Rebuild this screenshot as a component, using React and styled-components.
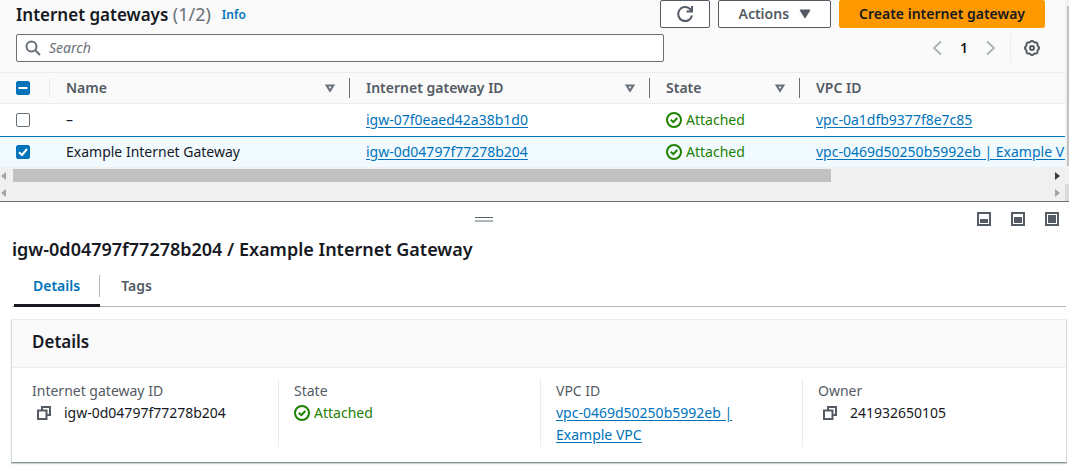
import React from "react";
import styled, { createGlobalStyle, css } from "styled-components";

const GlobalStyle = createGlobalStyle`
  *, *::before, *::after { box-sizing: border-box; }
  body {
    margin: 0;
    background: #fff;
    color: #16191f;
    font-family: "Noto Sans", "Open Sans", sans-serif;
    font-size: 14px;
    line-height: 22px;
  }
  h1, h2, h3, dl, dt, dd { margin: 0; }
  button, input { font: inherit; color: inherit; }
`;

const Page = styled.main`
  display: flex;
  flex-direction: column;
`;

const ListPanel = styled.section`
  border-bottom: 1px solid #6b6e70;
  background: #fafafa;
`;

const Scroller = styled.div`
  display: flex;
`;

const ListBody = styled.div`
  flex: 1;
  min-width: 0;
`;

const VerticalTrack = styled.div`
  width: 4px;
  padding: 6px 0 18px 2px;
  background: #f1f1f1;
`;

const VerticalThumb = styled.div`
  height: 100%;
  background: #c1c1c1;
`;

const TitleRow = styled.header`
  display: flex;
  align-items: center;
  height: 28px;
  padding: 0 20px 0 16px;
`;

const ListTitle = styled.h1`
  font-size: 17px;
  font-weight: 600;
`;

const Count = styled.span`
  font-size: 18px;
  font-weight: 400;
  color: #687078;
`;

const InfoLink = styled.a`
  margin: 2px auto 0 11px;
  font-size: 12px;
  font-weight: 600;
  color: #0073bb;
  text-decoration: none;
`;

const Actions = styled.div`
  display: flex;
  gap: 8px;
`;

const Button = styled.button`
  display: inline-flex;
  align-items: center;
  justify-content: center;
  gap: 10px;
  height: 28px;
  padding: 0 19px;
  border: 1px solid #545b64;
  border-radius: 2px;
  background: #fff;
  color: #545b64;
  font-size: 14px;
  font-weight: 600;
  white-space: nowrap;
  ${(p) => p.$iconOnly && css`
    width: 50px;
    padding: 0;
  `}
  ${(p) => p.$primary && css`
    border-color: #ff9900;
    background: #ff9900;
    color: #16191f;
  `}
`;

const FilterRow = styled.div`
  display: flex;
  align-items: center;
  justify-content: space-between;
  margin-top: 6px;
  padding: 0 20px 10px 16px;
`;

const SearchBox = styled.label`
  display: flex;
  align-items: center;
  gap: 8px;
  width: 63%;
  height: 28px;
  padding: 0 8px;
  border: 1px solid #687078;
  border-radius: 2px;
  background: #fff;
  color: #687078;
`;

const SearchInput = styled.input`
  flex: 1;
  min-width: 0;
  height: 22px;
  padding: 0;
  border: 0;
  outline: 0;
  background: transparent;
  &::placeholder {
    color: #687078;
    font-style: italic;
    opacity: 1;
  }
`;

const Pager = styled.nav`
  display: flex;
  align-items: center;
`;

const PlainButton = styled.button`
  display: flex;
  padding: 0;
  border: 0;
  background: none;
  color: ${(p) => (p.disabled ? "#aab7b8" : "#545b64")};
`;

const PageNumber = styled(PlainButton)`
  margin: 0 18px;
  font-weight: 600;
  color: #16191f;
`;

const PagerPreferences = styled.div`
  margin-left: 14px;
  padding: 6px 5px 6px 13px;
  border-left: 1px solid #eaeded;
`;

const TableWrap = styled.div`
  overflow: hidden;
  background: #fff;
`;

const Table = styled.table`
  width: 100%;
  table-layout: fixed;
  border-collapse: separate;
  border-spacing: 0;
`;

const Col = styled.col`
  width: ${(p) => p.$width};
`;

const HeadCell = styled.th`
  height: 32px;
  padding: 4px 0;
  border-top: 1px solid #eaeded;
  border-bottom: 1px solid #eaeded;
  background: #fafafa;
  color: #545b64;
  font-weight: 600;
  text-align: left;
`;

const HeadContent = styled.div`
  display: flex;
  align-items: center;
  justify-content: space-between;
  height: 20px;
  padding: 0 14px 0 16px;
  border-right: 1px solid ${(p) => p.$divider || "transparent"};
`;

const Row = styled.tr`
  background: ${(p) => (p.$selected ? "#f1faff" : "#fff")};
`;

const Cell = styled.td`
  height: ${(p) => (p.$selected ? "31px" : "32px")};
  padding: 0 0 0 16px;
  border-top: ${(p) => (p.$selected ? "1px solid #0073bb" : "0")};
  overflow: hidden;
  white-space: nowrap;
`;

const CheckBox = styled.input`
  appearance: none;
  display: block;
  width: 14px;
  height: 14px;
  margin: 0;
  border: 1px solid ${(p) => (p.$on ? "#0073bb" : "#687078")};
  border-radius: 2px;
  background: ${(p) => (p.$on ? "#0073bb" : "#fff")};
`;

const CheckWrap = styled.span`
  position: relative;
  display: block;
  width: 14px;
  height: 14px;
  svg {
    position: absolute;
    inset: 0;
    pointer-events: none;
  }
`;

const Link = styled.a`
  color: #0073bb;
  text-decoration: underline;
  text-underline-offset: 2px;
`;

const StatusText = styled.span`
  display: flex;
  align-items: center;
  gap: 4px;
  color: #1d8102;
`;

const HorizontalTrack = styled.div`
  display: flex;
  align-items: center;
  height: 17px;
  padding: 0 5px 0 1px;
  background: #f0f0f0;
`;

const TrackSpace = styled.div`
  flex: 1;
  display: flex;
  margin: 0 7px;
`;

const HorizontalThumb = styled.div`
  width: 79%;
  height: 13px;
  background: #c1c1c1;
`;

const Corner = styled.div`
  width: 4px;
  background: #dcdcdc;
`;

const PageScroll = styled.div`
  display: flex;
  & > :first-child { flex: 1; }
`;

const SplitPanel = styled.section`
  padding-bottom: 6px;
`;

const PanelBar = styled.div`
  display: flex;
  align-items: center;
  height: 34px;
  padding-right: 10px;
`;

const HandleArea = styled.div`
  flex: 1;
  display: flex;
  justify-content: center;
  margin-right: 9px;
`;

const Handle = styled.button`
  display: block;
  width: 18px;
  height: 5px;
  padding: 0;
  border: solid #879596;
  border-width: 1px 0 2px;
  border-top-color: #545b64;
  border-bottom-color: #aab7b8;
  background: none;
`;

const PanelSizes = styled.div`
  display: flex;
  gap: 20px;
`;

const PanelTitle = styled.h2`
  padding: 0 12px;
  font-size: 18px;
  line-height: 26px;
  font-weight: 600;
`;

const Tabs = styled.div`
  display: flex;
  gap: 2px;
  margin: 6px 3px 0 12px;
  padding-left: 2px;
  border-bottom: 1px solid #aab7b8;
`;

const Tab = styled.button`
  height: 39px;
  margin-bottom: -1px;
  padding: 0;
  border: 0;
  border-bottom: 3px solid ${(p) => (p.$active ? "#16191f" : "transparent")};
  background: none;
  color: ${(p) => (p.$active ? "#0073bb" : "#545b64")};
  font-weight: 600;
`;

const TabLabel = styled.span`
  display: block;
  padding: 0 19px;
  border-right: 1px solid ${(p) => (p.$divider ? "#aab7b8" : "transparent")};
`;

const Card = styled.section`
  margin: 12px 2px 0 11px;
  border: 1px solid #d5dbdb;
  border-top-color: #eaeded;
  border-bottom-color: #879596;
  background: #fff;
  box-shadow: 0 1px 1px rgba(0, 28, 36, 0.2);
`;

const CardHeader = styled.header`
  padding: 9px 20px 12px;
  border-bottom: 1px solid #eaeded;
  background: #fafafa;
`;

const CardTitle = styled.h3`
  font-size: 17px;
  line-height: 26px;
  font-weight: 600;
`;

const Fields = styled.dl`
  display: grid;
  grid-template-columns: repeat(4, 1fr);
  padding: 11px 2px 15px 4px;
`;

const Field = styled.div`
  min-width: 0;
  padding: 1px 60px 1px 15px;
  border-left: 1px solid #eaeded;
  &:first-child { border-left-color: transparent; padding-right: 0; }
`;

const Label = styled.dt`
  color: #545b64;
`;

const Value = styled.dd`
  display: ${(p) => (p.$copy ? "flex" : "block")};
  align-items: center;
  gap: 13px;
  padding-left: ${(p) => (p.$copy ? "5px" : "0")};
`;

const RefreshIcon = () => (
  <svg width="18" height="18" viewBox="0 0 18 18" fill="none" stroke="currentColor" strokeWidth="2" aria-hidden="true">
    <path d="M16 10.5A7 7 0 1 1 14 4l1.8 2" />
    <path d="M16 1v5.5h-5.5" />
  </svg>
);

const CaretIcon = () => (
  <svg width="12" height="10" viewBox="0 0 12 10" aria-hidden="true">
    <path d="M1 1h10L6 9z" fill="currentColor" stroke="currentColor" strokeLinejoin="round" />
  </svg>
);

const SortIcon = () => (
  <svg width="10" height="9" viewBox="0 0 10 9" fill="none" stroke="#687078" strokeWidth="2" aria-hidden="true">
    <path d="M1.6 1.5h6.8L5 6.8z" />
  </svg>
);

const SearchIcon = () => (
  <svg width="16" height="16" viewBox="0 0 16 16" fill="none" stroke="currentColor" strokeWidth="2" aria-hidden="true">
    <circle cx="6.5" cy="6.5" r="5" />
    <path d="M10 10l5 5" />
  </svg>
);

const ChevronIcon = ({ right }) => (
  <svg width="10" height="16" viewBox="0 0 10 16" fill="none" stroke="currentColor" strokeWidth="2" aria-hidden="true">
    <path d={right ? "M1 1.5L8 8l-7 6.5" : "M9 1.5L2 8l7 6.5"} />
  </svg>
);

const gearOutline = Array.from({ length: 96 }, (_, i) => {
  const a = (i / 96) * Math.PI * 2;
  const r = 6.6 + 0.5 * Math.cos(8 * a);
  return `${i ? "L" : "M"}${(8 + r * Math.cos(a)).toFixed(2)} ${(8 + r * Math.sin(a)).toFixed(2)}`;
}).join("") + "Z";

const GearIcon = () => (
  <svg width="16" height="16" viewBox="0 0 16 16" fill="none" stroke="currentColor" strokeWidth="2" aria-hidden="true">
    <path d={gearOutline} />
    <circle cx="8" cy="8" r="2" />
  </svg>
);

const StatusIcon = () => (
  <svg width="16" height="16" viewBox="0 0 16 16" fill="none" stroke="currentColor" strokeWidth="2" aria-hidden="true">
    <circle cx="8" cy="8" r="7" />
    <path d="M4.8 7.8l2.5 2.4 4-4.2" />
  </svg>
);

const CopyIcon = () => (
  <svg width="14" height="14" viewBox="0 0 14 14" fill="none" stroke="#545b64" strokeWidth="2" aria-hidden="true">
    <path d="M1 4.5h8.5V13H1z" />
    <path d="M5 4V1h8v8h-3" />
  </svg>
);

const PanelIcon = ({ top }) => (
  <svg width="14" height="14" viewBox="0 0 14 14" aria-hidden="true">
    <path d="M1 1h12v12H1z" fill="none" stroke="#545b64" strokeWidth="2" />
    <path d={`M3 ${top}h8V11H3z`} fill="#545b64" />
  </svg>
);

const ArrowIcon = ({ right, color }) => (
  <svg width="5" height="8" viewBox="0 0 5 8" aria-hidden="true">
    <path d={right ? "M0 0l5 4-5 4z" : "M5 0L0 4l5 4z"} fill={color} />
  </svg>
);

const Status = () => (
  <StatusText>
    <StatusIcon />
    Attached
  </StatusText>
);

const Check = ({ label, checked, partial }) => (
  <CheckWrap>
    <CheckBox type="checkbox" aria-label={label} defaultChecked={checked} $on={checked || partial} />
    <svg width="14" height="14" viewBox="0 0 14 14" fill="none" stroke="#fff" strokeWidth="2" aria-hidden="true">
      {checked && <path d="M3 7.2l3 2.8 5-6" />}
      {partial && <path d="M2.5 7h9" />}
    </svg>
  </CheckWrap>
);

const columns = [
  { label: "Name", sortable: true },
  { label: "Internet gateway ID", sortable: true },
  { label: "State", sortable: true },
  { label: "VPC ID" },
];

const gateways = [
  { name: "–", id: "igw-07f0eaed42a38b1d0", vpc: "vpc-0a1dfb9377f8e7c85" },
  {
    name: "Example Internet Gateway",
    id: "igw-0d04797f77278b204",
    vpc: "vpc-0469d50250b5992eb | Example VPC",
    selected: true,
  },
];

export default function App() {
  return (
    <Page>
      <GlobalStyle />
      <ListPanel>
        <Scroller>
          <ListBody>
            <TitleRow>
              <ListTitle>
                Internet gateways <Count>(1/2)</Count>
              </ListTitle>
              <InfoLink href="#info">Info</InfoLink>
              <Actions>
                <Button $iconOnly aria-label="Refresh"><RefreshIcon /></Button>
                <Button>Actions <CaretIcon /></Button>
                <Button $primary>Create internet gateway</Button>
              </Actions>
            </TitleRow>
            <FilterRow>
              <SearchBox>
                <SearchIcon />
                <SearchInput type="text" placeholder="Search" aria-label="Search" />
              </SearchBox>
              <Pager aria-label="Pagination">
                <PlainButton disabled aria-label="Previous page"><ChevronIcon /></PlainButton>
                <PageNumber>1</PageNumber>
                <PlainButton disabled aria-label="Next page"><ChevronIcon right /></PlainButton>
                <PagerPreferences>
                  <PlainButton aria-label="Preferences"><GearIcon /></PlainButton>
                </PagerPreferences>
              </Pager>
            </FilterRow>
            <TableWrap>
              <Table>
                <colgroup>
                  <Col $width="50px" />
                  <Col $width="300px" />
                  <Col $width="300px" />
                  <Col $width="150px" />
                  <Col $width="auto" />
                </colgroup>
                <thead>
                  <tr>
                    <HeadCell>
                      <HeadContent $divider="#eaeded"><Check label="Select all" partial /></HeadContent>
                    </HeadCell>
                    {columns.map((c) => (
                      <HeadCell key={c.label} scope="col">
                        <HeadContent $divider={c.sortable && "#687078"}>
                          {c.label}
                          {c.sortable && <SortIcon />}
                        </HeadContent>
                      </HeadCell>
                    ))}
                  </tr>
                </thead>
                <tbody>
                  {gateways.map((g) => (
                    <Row key={g.id} $selected={g.selected}>
                      <Cell $selected={g.selected}><Check label={`Select ${g.id}`} checked={g.selected} /></Cell>
                      <Cell $selected={g.selected}>{g.name}</Cell>
                      <Cell $selected={g.selected}><Link href="#gateway">{g.id}</Link></Cell>
                      <Cell $selected={g.selected}><Status /></Cell>
                      <Cell $selected={g.selected}><Link href="#vpc">{g.vpc}</Link></Cell>
                    </Row>
                  ))}
                </tbody>
              </Table>
            </TableWrap>
            <HorizontalTrack>
              <ArrowIcon color="#a3a3a3" />
              <TrackSpace><HorizontalThumb /></TrackSpace>
              <ArrowIcon right color="#404040" />
            </HorizontalTrack>
          </ListBody>
          <VerticalTrack><VerticalThumb /></VerticalTrack>
        </Scroller>
        <PageScroll>
          <HorizontalTrack>
            <ArrowIcon color="#a3a3a3" />
            <TrackSpace />
            <ArrowIcon right color="#a3a3a3" />
          </HorizontalTrack>
          <Corner />
        </PageScroll>
      </ListPanel>

      <SplitPanel>
        <PanelBar>
          <HandleArea><Handle aria-label="Resize panel" /></HandleArea>
          <PanelSizes>
            <PlainButton aria-label="Small panel"><PanelIcon top={7} /></PlainButton>
            <PlainButton aria-label="Medium panel"><PanelIcon top={5} /></PlainButton>
            <PlainButton aria-label="Full panel"><PanelIcon top={3} /></PlainButton>
          </PanelSizes>
        </PanelBar>
        <PanelTitle>igw-0d04797f77278b204 / Example Internet Gateway</PanelTitle>
        <Tabs role="tablist">
          <Tab role="tab" aria-selected="true" $active><TabLabel $divider>Details</TabLabel></Tab>
          <Tab role="tab" aria-selected="false"><TabLabel>Tags</TabLabel></Tab>
        </Tabs>
        <Card>
          <CardHeader><CardTitle>Details</CardTitle></CardHeader>
          <Fields>
            <Field>
              <Label>Internet gateway ID</Label>
              <Value $copy>
                <PlainButton aria-label="Copy gateway ID"><CopyIcon /></PlainButton>
                igw-0d04797f77278b204
              </Value>
            </Field>
            <Field>
              <Label>State</Label>
              <Value><Status /></Value>
            </Field>
            <Field>
              <Label>VPC ID</Label>
              <Value><Link href="#vpc">vpc-0469d50250b5992eb | Example VPC</Link></Value>
            </Field>
            <Field>
              <Label>Owner</Label>
              <Value $copy>
                <PlainButton aria-label="Copy owner"><CopyIcon /></PlainButton>
                241932650105
              </Value>
            </Field>
          </Fields>
        </Card>
      </SplitPanel>
    </Page>
  );
}
